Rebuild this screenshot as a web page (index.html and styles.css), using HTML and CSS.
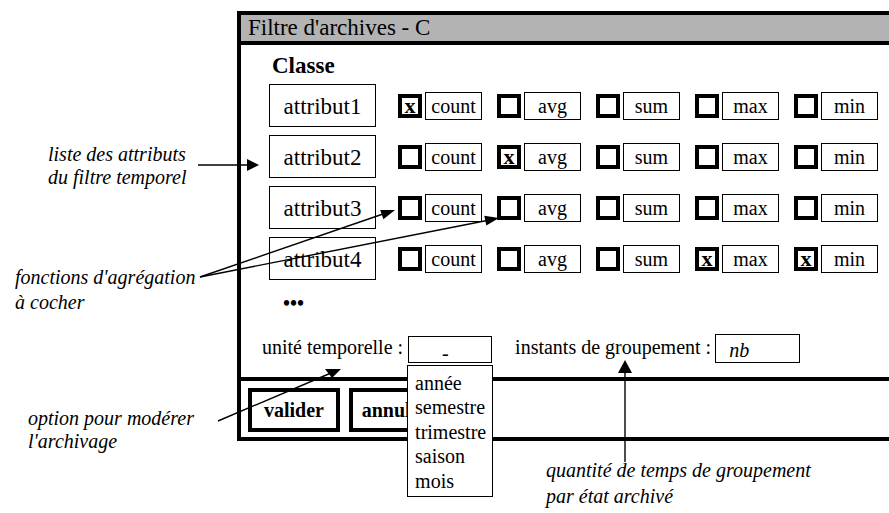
FILE: index.html
```html
<!DOCTYPE html>
<html>
<head>
<meta charset="utf-8">
<link rel="stylesheet" href="styles.css">
</head>
<body>
<div class="stage">
  <div class="window">
    <div class="titlebar">Filtre d'archives - C</div>
    <div class="main">
      <div class="classe">Classe</div>
      <div class="rows">
        <div class="row">
          <div class="attr">attribut1</div>
          <div class="funcs">
            <div class="fn"><span class="cb">x</span><span class="lbl">count</span></div>
            <div class="fn"><span class="cb"></span><span class="lbl">avg</span></div>
            <div class="fn"><span class="cb"></span><span class="lbl">sum</span></div>
            <div class="fn"><span class="cb"></span><span class="lbl">max</span></div>
            <div class="fn"><span class="cb"></span><span class="lbl">min</span></div>
          </div>
        </div>
        <div class="row">
          <div class="attr">attribut2</div>
          <div class="funcs">
            <div class="fn"><span class="cb"></span><span class="lbl">count</span></div>
            <div class="fn"><span class="cb">x</span><span class="lbl">avg</span></div>
            <div class="fn"><span class="cb"></span><span class="lbl">sum</span></div>
            <div class="fn"><span class="cb"></span><span class="lbl">max</span></div>
            <div class="fn"><span class="cb"></span><span class="lbl">min</span></div>
          </div>
        </div>
        <div class="row">
          <div class="attr">attribut3</div>
          <div class="funcs">
            <div class="fn"><span class="cb"></span><span class="lbl">count</span></div>
            <div class="fn"><span class="cb"></span><span class="lbl">avg</span></div>
            <div class="fn"><span class="cb"></span><span class="lbl">sum</span></div>
            <div class="fn"><span class="cb"></span><span class="lbl">max</span></div>
            <div class="fn"><span class="cb"></span><span class="lbl">min</span></div>
          </div>
        </div>
        <div class="row">
          <div class="attr">attribut4</div>
          <div class="funcs">
            <div class="fn"><span class="cb"></span><span class="lbl">count</span></div>
            <div class="fn"><span class="cb"></span><span class="lbl">avg</span></div>
            <div class="fn"><span class="cb"></span><span class="lbl">sum</span></div>
            <div class="fn"><span class="cb">x</span><span class="lbl">max</span></div>
            <div class="fn"><span class="cb">x</span><span class="lbl">min</span></div>
          </div>
        </div>
      </div>
      <div class="dots">&#8226;&#8226;&#8226;</div>
      <div class="options">
        <span class="opt-label">unit&eacute; temporelle :</span>
        <div class="select"><span class="sel-value">-</span>
          <ul class="menu">
            <li class="menu-item">ann&eacute;e</li>
            <li class="menu-item">semestre</li>
            <li class="menu-item">trimestre</li>
            <li class="menu-item">saison</li>
            <li class="menu-item">mois</li>
          </ul>
        </div>
        <span class="opt-label second">instants de groupement :</span>
        <div class="input">nb</div>
      </div>
    </div>
    <div class="footer">
      <div class="btn">valider</div>
      <div class="btn">annuler</div>
    </div>
  </div>

  <svg class="arrows" viewBox="0 0 889 513" width="889" height="513">
    <g class="arrow-lines">
      <line x1="198" y1="165" x2="249" y2="165"/>
      <line x1="200" y1="277" x2="383" y2="214"/>
      <line x1="200" y1="277" x2="487" y2="220.5"/>
      <line x1="218" y1="421" x2="331" y2="373"/>
      <line x1="625" y1="462" x2="625" y2="372"/>
    </g>
    <g class="arrow-heads">
      <polygon points="247,159 259,165 247,171"/>
      <polygon points="395,210 383.4,219.3 380.2,209.9"/>
      <polygon points="499,218 486.3,225.6 484.3,215.8"/>
      <polygon points="325,369 341,369 332,378"/>
      <polygon points="618,373 632,373 625,360"/>
    </g>
  </svg>

  <div class="note note-liste">liste des attributs<br>du filtre temporel</div>
  <div class="note note-fonctions">fonctions d'agr&eacute;gation<br>&agrave; cocher</div>
  <div class="note note-option">option pour mod&eacute;rer<br>l'archivage</div>
  <div class="note note-quantite">quantit&eacute; de temps de groupement<br>par &eacute;tat archiv&eacute;</div>
</div>
</body>
</html>
```

FILE: styles.css
```css
body {
  margin: 0;
  padding: 0;
  background: #fff;
  color: #000;
  font-family: "Liberation Serif", Tinos, "Times New Roman", Times, serif;
}

.stage {
  position: relative;
  width: 889px;
  height: 513px;
  overflow: hidden;
  font-family: "Liberation Serif", Tinos, "Times New Roman", Times, serif;
}

.titlebar, .classe, .attr, .cb, .lbl, .dots, .opt-label, .select,
.sel-value, .menu, .menu-item, .input, .btn, .note {
  font-family: "Liberation Serif", Tinos, "Times New Roman", Times, serif;
}

.window {
  margin: 11px 0 0 237px;
  width: 720px;
  border: 4px solid #000;
  box-sizing: border-box;
}

.titlebar {
  height: 26px;
  background: #b3b3b3;
  border-bottom: 4px solid #000;
  font-size: 23px;
  line-height: 26px;
  padding-left: 7px;
  white-space: nowrap;
}

.main {
  height: 336px;
  box-sizing: border-box;
  padding-top: 7px;
  border-bottom: 4px solid #000;
}

.classe {
  font-weight: bold;
  font-size: 23px;
  line-height: 27px;
  margin-left: 31px;
}

.rows {
  margin: 5px 0 0 28px;
  display: flex;
  flex-direction: column;
  gap: 8px;
}

.row {
  display: flex;
  align-items: center;
}

.attr {
  width: 107px;
  height: 43px;
  box-sizing: border-box;
  border: 1px solid #000;
  font-size: 23px;
  padding-top: 3px;
  display: flex;
  align-items: center;
  justify-content: center;
}

.funcs {
  display: flex;
  gap: 15px;
  margin-left: 22px;
}

.fn {
  display: flex;
  align-items: center;
  gap: 3px;
}

.cb {
  width: 24px;
  height: 24px;
  box-sizing: border-box;
  border: 4px solid #000;
  font-weight: bold;
  font-size: 22px;
  padding-top: 1px;
  display: flex;
  align-items: center;
  justify-content: center;
}

.lbl {
  width: 57px;
  height: 28px;
  box-sizing: border-box;
  border: 1px solid #000;
  font-size: 20px;
  padding-top: 1px;
  display: flex;
  align-items: center;
  justify-content: center;
}

.dots {
  font-size: 20px;
  line-height: 20px;
  font-weight: bold;
  margin: 13px 0 0 42px;
}

.options {
  display: flex;
  align-items: flex-start;
  height: 29px;
  margin: 21px 0 0 21px;
}

.opt-label {
  font-size: 20px;
  line-height: 23px;
  margin-top: 2px;
  white-space: nowrap;
}

.opt-label.second {
  margin-left: 23px;
}

.select {
  position: relative;
  margin: 2px 0 0 5px;
  width: 84px;
  height: 27px;
  box-sizing: border-box;
  border: 1px solid #000;
  font-size: 20px;
  line-height: 20px;
  padding: 6px 0 0 33px;
}

.menu {
  position: absolute;
  top: 28px;
  left: -2px;
  width: 86px;
  box-sizing: border-box;
  margin: 0;
  padding: 5px 0 3px 7px;
  list-style: none;
  background: #fff;
  border: 1px solid #000;
  font-size: 20px;
  line-height: 24.4px;
  z-index: 2;
}

.input {
  margin-left: 4px;
  width: 85px;
  height: 29px;
  box-sizing: border-box;
  border: 1px solid #000;
  font-size: 20px;
  font-style: italic;
  line-height: 23px;
  padding: 4px 0 0 13px;
}

.footer {
  display: flex;
  gap: 9px;
  height: 56px;
  box-sizing: border-box;
  padding: 7px 0 0 7px;
}

.btn {
  width: 92px;
  height: 44px;
  box-sizing: border-box;
  border: 4px solid #000;
  font-weight: bold;
  font-size: 20px;
  display: flex;
  align-items: center;
  justify-content: center;
}

.arrows {
  position: absolute;
  left: 0;
  top: 0;
  pointer-events: none;
  z-index: 3;
}

.arrow-lines line {
  stroke: #000;
  stroke-width: 1.4;
}

.arrow-heads polygon {
  fill: #000;
}

.note {
  position: absolute;
  font-style: italic;
  font-size: 20px;
  white-space: nowrap;
  z-index: 3;
}

.note-liste {
  left: 48px;
  top: 143px;
  line-height: 22.6px;
}

.note-fonctions {
  left: 15px;
  top: 265px;
  line-height: 25px;
}

.note-option {
  left: 28px;
  top: 407px;
  line-height: 23px;
}

.note-quantite {
  left: 546px;
  top: 457px;
  line-height: 26px;
}
```
